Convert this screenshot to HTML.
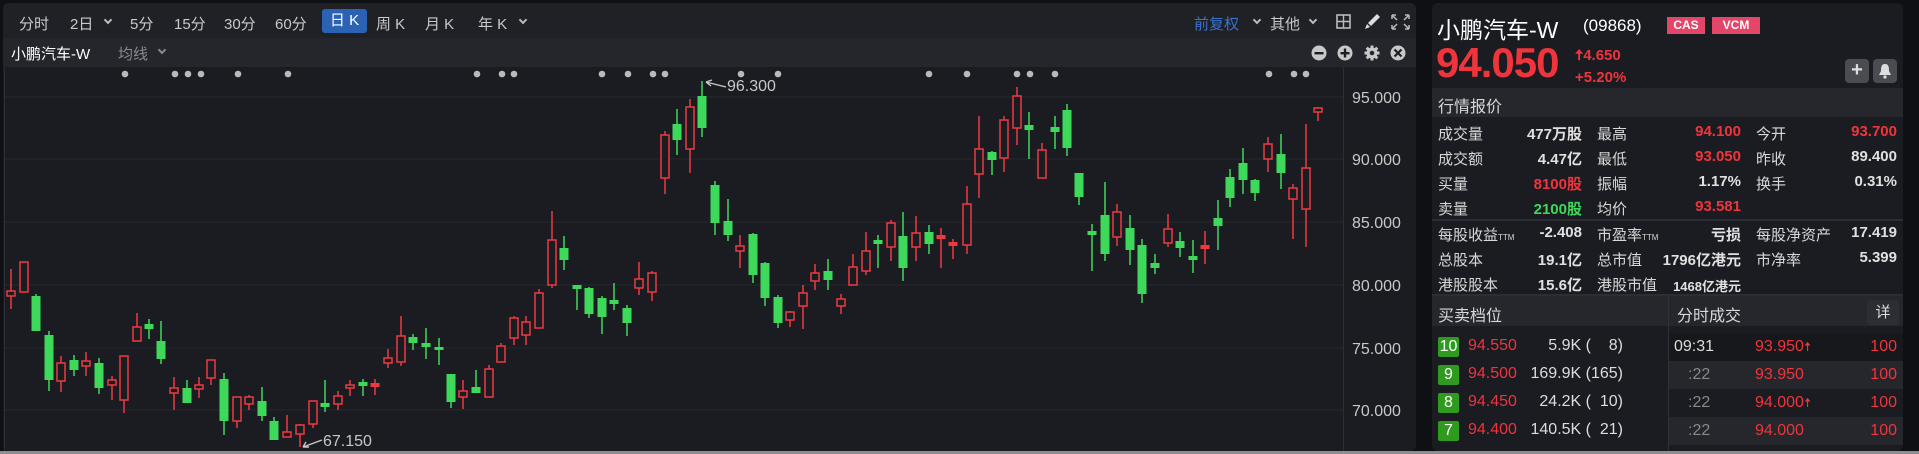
<!DOCTYPE html>
<html><head><meta charset="utf-8"><style>
*{margin:0;padding:0;box-sizing:border-box}
body{width:1919px;height:454px;background:#0f1014;overflow:hidden;position:relative;font-family:"Liberation Sans","Noto Sans CJK SC",sans-serif;color:#e6e6e6}
.a{position:absolute;white-space:nowrap}
.cp{position:absolute;left:3px;top:3px;width:1413px;height:448px;background:#1b1c21;border-radius:6px;overflow:hidden}
.tb{position:absolute;left:0;top:0;width:100%;height:35px;background:#1f2127}
.r2{position:absolute;left:0;top:35px;width:100%;height:29px;background:#24262c}
.t{font-size:15px;color:#c9c9c9;top:10px}
.chev{display:inline-block;width:6px;height:6px;border-right:2px solid #bbb;border-bottom:2px solid #bbb;transform:rotate(45deg);position:absolute}
.rp{position:absolute;left:1432px;top:3px;width:471px;height:448px;background:#1b1c21;border-radius:6px;overflow:hidden}
.hd{position:absolute;left:0;width:100%;background:#25272d}
.lb{font-size:15px;color:#d8d8d8}
.v{font-size:15px;font-weight:bold;color:#e0e0e0;text-align:right}
.red{color:#f0343c}.grn{color:#3ed85a}
.bd{position:absolute;width:21px;height:20px;background:#2e9a1e;color:#fff;font-size:16px;text-align:center;line-height:20px;border-radius:2px}
.ob{font-size:16px}
</style></head><body>
<div class="cp">
 <div class="tb"></div><div class="r2"></div>
 <div class="a t" style="left:16px">分时</div>
 <div class="a t" style="left:67px">2日</div><span class="chev" style="left:102px;top:14px"></span>
 <div class="a t" style="left:127px">5分</div>
 <div class="a t" style="left:171px">15分</div>
 <div class="a t" style="left:221px">30分</div>
 <div class="a t" style="left:272px">60分</div>
 <div class="a" style="left:319px;top:6px;width:45px;height:24px;background:#2b62b4;border-radius:3px;color:#fff;font-size:15px;text-align:center;line-height:24px">日 K</div>
 <div class="a t" style="left:373px">周 K</div>
 <div class="a t" style="left:422px">月 K</div>
 <div class="a t" style="left:475px">年 K</div><span class="chev" style="left:517px;top:14px"></span>
 <div class="a" style="left:1191px;top:10px;font-size:15px;color:#3a72c8">前复权</div><span class="chev" style="left:1251px;top:14px"></span>
 <div class="a t" style="left:1267px">其他</div><span class="chev" style="left:1307px;top:14px"></span>
 <svg class="a" style="left:1328px;top:9px" width="90" height="20" viewBox="0 0 90 20">
  <rect x="6" y="3" width="13" height="13" fill="none" stroke="#bbb" stroke-width="1.6"/><line x1="12.5" y1="3" x2="12.5" y2="16" stroke="#bbb" stroke-width="1.4"/><line x1="6" y1="9.5" x2="19" y2="9.5" stroke="#bbb" stroke-width="1.4"/>
  <path d="M46 2 L49 5 L40 14 L37 11 Z" fill="#ddd"/><path d="M36 12 L39 15 L34 17 Z" fill="#ddd"/>
  <path d="M61 3h4M61 3v4M78 3h-4M78 3v4M61 17h4M61 17v-4M78 17h-4M78 17v-4M62 4l4 4M77 4l-4 4M62 16l4-4M77 16l-4-4" stroke="#bbb" stroke-width="1.5" fill="none"/>
 </svg>
 <div class="a" style="left:8px;top:40px;font-size:15px;color:#fff">小鹏汽车-W</div>
 <div class="a" style="left:115px;top:40px;font-size:15px;color:#8a8b90">均线</div><span class="chev" style="left:156px;top:44px;border-color:#8a8b90"></span>
 <svg class="a" style="left:1306px;top:42px" width="100" height="18" viewBox="0 0 100 18">
  <circle cx="10" cy="8" r="7.5" fill="#c8c8c8"/><rect x="5.5" y="7" width="9" height="2.4" fill="#1d1e24"/>
  <circle cx="36" cy="8" r="7.5" fill="#c8c8c8"/><rect x="31.5" y="7" width="9" height="2.4" fill="#1d1e24"/><rect x="34.8" y="3.5" width="2.4" height="9" fill="#1d1e24"/>
  <circle cx="63" cy="8" r="5.5" fill="#c8c8c8"/><g stroke="#c8c8c8" stroke-width="3"><line x1="63" y1="0.5" x2="63" y2="15.5"/><line x1="55.5" y1="8" x2="70.5" y2="8"/><line x1="57.7" y1="2.7" x2="68.3" y2="13.3"/><line x1="68.3" y1="2.7" x2="57.7" y2="13.3"/></g><circle cx="63" cy="8" r="2.3" fill="#24262c"/>
  <circle cx="89" cy="8" r="7.5" fill="#c8c8c8"/><path d="M85.5 4.5l7 7M92.5 4.5l-7 7" stroke="#1d1e24" stroke-width="2.2"/>
 </svg>
</div>
<svg class="a" style="left:0;top:0" width="1420" height="454" viewBox="0 0 1420 454">
 <g stroke="#25272d" stroke-width="1"><line x1="4" y1="97" x2="1343" y2="97"/><line x1="4" y1="159" x2="1343" y2="159"/><line x1="4" y1="222" x2="1343" y2="222"/><line x1="4" y1="285" x2="1343" y2="285"/><line x1="4" y1="348" x2="1343" y2="348"/><line x1="4" y1="410" x2="1343" y2="410"/></g>
 <line x1="1343.5" y1="67" x2="1343.5" y2="451" stroke="#2c2e35"/>
 <line x1="4.5" y1="67" x2="4.5" y2="451" stroke="#2c2e35"/>
 <g fill="#b9b9b9">
  <circle cx="125" cy="74" r="3.3"/><circle cx="175" cy="74" r="3.3"/><circle cx="188" cy="74" r="3.3"/><circle cx="201" cy="74" r="3.3"/><circle cx="238" cy="74" r="3.3"/><circle cx="288" cy="74" r="3.3"/>
  <circle cx="477" cy="74" r="3.3"/><circle cx="502" cy="74" r="3.3"/><circle cx="514" cy="74" r="3.3"/><circle cx="602" cy="74" r="3.3"/><circle cx="628" cy="74" r="3.3"/><circle cx="653" cy="74" r="3.3"/><circle cx="665" cy="74" r="3.3"/><circle cx="741" cy="74" r="3.3"/><circle cx="778" cy="74" r="3.3"/>
  <circle cx="929" cy="74" r="3.3"/><circle cx="967" cy="74" r="3.3"/><circle cx="1017" cy="74" r="3.3"/><circle cx="1030" cy="74" r="3.3"/><circle cx="1055" cy="74" r="3.3"/><circle cx="1269" cy="74" r="3.3"/><circle cx="1294" cy="74" r="3.3"/><circle cx="1306" cy="74" r="3.3"/>
 </g>
 <g font-family="Liberation Sans,sans-serif" font-size="16" fill="#c8c8c8">
  <text x="1352" y="103">95.000</text><text x="1352" y="165">90.000</text><text x="1352" y="228">85.000</text><text x="1352" y="291">80.000</text><text x="1352" y="354">75.000</text><text x="1352" y="416">70.000</text>
  <text x="727" y="91" font-size="16">96.300</text><text x="323" y="446" font-size="16">67.150</text>
 </g>
 <g stroke="#c8c8c8" stroke-width="1.4" fill="none"><path d="M726 87 L706 82 M706 82 l6 -2 M706 82 l5 4"/><path d="M322 440 L303 447 M303 447 l6 0 M303 447 l3 -5"/></g>
 <g id="c" stroke-width="1.5"></g>
</svg>
<div class="rp">
 <div class="a" style="left:5px;top:8px;font-size:23px;color:#fff">小鹏汽车-W</div>
 <div class="a" style="left:151px;top:13px;font-size:17px;color:#fff">(09868)</div>
 <div class="a" style="left:235px;top:14px;width:38px;height:17px;background:#e4466a;color:#fff;font-size:12px;font-weight:bold;text-align:center;line-height:17px">CAS</div>
 <div class="a" style="left:280px;top:14px;width:48px;height:17px;background:#e4466a;color:#fff;font-size:12px;font-weight:bold;text-align:center;line-height:17px">VCM</div>
 <div class="a red" style="left:4px;top:36px;font-size:42px;font-weight:bold;letter-spacing:-1px">94.050</div>
 <div class="a red" style="left:143px;top:42px;font-size:15px;font-weight:bold">🠅4.650</div>
 <div class="a red" style="left:143px;top:66px;font-size:15px;font-weight:bold">+5.20%</div>
 <div class="a" style="left:413px;top:56px;width:24px;height:24px;background:#4a4c52;border-radius:4px;color:#ddd;font-size:20px;text-align:center;line-height:23px;font-weight:bold">+</div>
 <div class="a" style="left:441px;top:56px;width:24px;height:24px;background:#4a4c52;border-radius:4px"><svg width="24" height="24"><path d="M12 5 C8 5 8 9 8 12 L6 16 H18 L16 12 C16 9 16 5 12 5Z" fill="#ddd"/><circle cx="12" cy="18" r="1.6" fill="#ddd"/></svg></div>
 <div class="hd" style="top:85px;height:29px"></div>
 <div class="a lb" style="left:6px;top:90px;font-size:16px">行情报价</div>
 <div class="hd" style="top:216px;height:2px;background:#2c2e35"></div>
 <div class="hd" style="top:291px;height:2px;background:#2c2e35"></div>
 <div class="a lb" style="left:6px;top:120px">成交量</div><div class="a v" style="right:321px;top:120px">477万股</div>
 <div class="a lb" style="left:165px;top:120px">最高</div><div class="a v red" style="right:162px;top:120px">94.100</div>
 <div class="a lb" style="left:324px;top:120px">今开</div><div class="a v red" style="right:6px;top:120px">93.700</div>
 <div class="a lb" style="left:6px;top:145px">成交额</div><div class="a v" style="right:321px;top:145px">4.47亿</div>
 <div class="a lb" style="left:165px;top:145px">最低</div><div class="a v red" style="right:162px;top:145px">93.050</div>
 <div class="a lb" style="left:324px;top:145px">昨收</div><div class="a v" style="right:6px;top:145px">89.400</div>
 <div class="a lb" style="left:6px;top:170px">买量</div><div class="a v red" style="right:321px;top:170px">8100股</div>
 <div class="a lb" style="left:165px;top:170px">振幅</div><div class="a v" style="right:162px;top:170px">1.17%</div>
 <div class="a lb" style="left:324px;top:170px">换手</div><div class="a v" style="right:6px;top:170px">0.31%</div>
 <div class="a lb" style="left:6px;top:195px">卖量</div><div class="a v grn" style="right:321px;top:195px">2100股</div>
 <div class="a lb" style="left:165px;top:195px">均价</div><div class="a v red" style="right:162px;top:195px">93.581</div>
 <div class="a lb" style="left:6px;top:221px">每股收益<span style="font-size:8px">TTM</span></div><div class="a v" style="right:321px;top:221px">-2.408</div>
 <div class="a lb" style="left:165px;top:221px">市盈率<span style="font-size:8px">TTM</span></div><div class="a v" style="right:162px;top:221px">亏损</div>
 <div class="a lb" style="left:324px;top:221px">每股净资产</div><div class="a v" style="right:6px;top:221px">17.419</div>
 <div class="a lb" style="left:6px;top:246px">总股本</div><div class="a v" style="right:321px;top:246px">19.1亿</div>
 <div class="a lb" style="left:165px;top:246px">总市值</div><div class="a v" style="right:162px;top:246px">1796亿港元</div>
 <div class="a lb" style="left:324px;top:246px">市净率</div><div class="a v" style="right:6px;top:246px">5.399</div>
 <div class="a lb" style="left:6px;top:271px">港股股本</div><div class="a v" style="right:321px;top:271px">15.6亿</div>
 <div class="a lb" style="left:165px;top:271px">港股市值</div><div class="a v" style="right:162px;top:271px;font-size:13px;top:273px">1468亿港元</div>
 <div class="hd" style="top:293px;height:30px"></div>
 <div class="a" style="left:236px;top:293px;width:1px;height:160px;background:#2f3138"></div>
 <div class="a lb" style="left:6px;top:299px;font-size:16px">买卖档位</div>
 <div class="a lb" style="left:245px;top:299px;font-size:16px">分时成交</div>
 <div class="a" style="left:435px;top:297px;width:32px;height:25px;background:#2c2e34;border-radius:4px;color:#ddd;font-size:15px;text-align:center;line-height:25px">详</div>
 <div class="a" style="left:237px;top:330px;width:234px;height:28px;background:#17181c"></div>
 <div class="a" style="left:237px;top:358px;width:234px;height:28px;background:#25272d"></div>
 <div class="a" style="left:237px;top:414px;width:234px;height:28px;background:#25272d"></div>
 <div class="bd" style="left:6px;top:334px">10</div><div class="a ob red" style="left:36px;top:334px">94.550</div><div class="a ob" style="right:280px;top:334px;color:#ddd">5.9K (&nbsp;&nbsp;&nbsp;&nbsp;8)</div>
 <div class="bd" style="left:6px;top:362px">9</div><div class="a ob red" style="left:36px;top:362px">94.500</div><div class="a ob" style="right:280px;top:362px;color:#ddd">169.9K (165)</div>
 <div class="bd" style="left:6px;top:390px">8</div><div class="a ob red" style="left:36px;top:390px">94.450</div><div class="a ob" style="right:280px;top:390px;color:#ddd">24.2K (&nbsp;&nbsp;10)</div>
 <div class="bd" style="left:6px;top:418px">7</div><div class="a ob red" style="left:36px;top:418px">94.400</div><div class="a ob" style="right:280px;top:418px;color:#ddd">140.5K (&nbsp;&nbsp;21)</div>
 <div class="a ob" style="left:242px;top:335px;color:#ddd">09:31</div><div class="a ob red" style="left:323px;top:335px">93.950<span style="font-size:13px">🠅</span></div><div class="a ob red" style="right:6px;top:335px">100</div>
 <div class="a ob" style="left:256px;top:363px;color:#888">:22</div><div class="a ob red" style="left:323px;top:363px">93.950</div><div class="a ob red" style="right:6px;top:363px">100</div>
 <div class="a ob" style="left:256px;top:391px;color:#888">:22</div><div class="a ob red" style="left:323px;top:391px">94.000<span style="font-size:13px">🠅</span></div><div class="a ob red" style="right:6px;top:391px">100</div>
 <div class="a ob" style="left:256px;top:419px;color:#888">:22</div><div class="a ob red" style="left:323px;top:419px">94.000</div><div class="a ob red" style="right:6px;top:419px">100</div>
</div>
<div class="a" style="left:0;top:451px;width:1919px;height:3px;background:#8c8d91"></div>
<script>
var d=[[11,269,291,296,309,'r'],[24,262,262,292,292,'r'],[36,294,296,331,331,'g'],[49,331,335,380,391,'g'],[61,356,363,381,392,'r'],[74,355,360,370,376,'g'],[86,352,361,366,376,'r'],[99,358,363,388,394,'g'],[112,376,380,385,400,'r'],[124,356,356,400,413,'r'],[137,313,327,341,341,'r'],[149,319,324,329,339,'g'],[161,321,341,359,364,'g'],[174,377,388,393,410,'r'],[187,380,388,403,403,'g'],[199,377,385,389,398,'r'],[211,360,360,378,385,'r'],[224,373,379,421,435,'g'],[237,397,397,421,428,'r'],[249,395,397,404,410,'r'],[262,387,401,416,421,'g'],[274,417,421,440,440,'g'],[287,415,432,437,437,'r'],[300,424,425,434,447,'r'],[313,401,401,424,428,'r'],[325,380,404,406,412,'g'],[338,391,396,404,410,'r'],[350,380,385,388,396,'r'],[363,379,383,385,396,'g'],[375,379,384,386,395,'r'],[388,349,358,363,368,'r'],[401,316,336,362,366,'r'],[413,334,337,343,350,'g'],[426,328,344,346,359,'g'],[439,338,348,349,365,'g'],[451,374,374,402,408,'g'],[463,380,391,397,409,'r'],[476,370,387,393,393,'g'],[489,365,369,397,397,'r'],[501,343,346,362,362,'r'],[514,316,318,338,345,'r'],[526,316,322,335,345,'r'],[539,289,293,328,328,'r'],[552,211,240,285,288,'r'],[564,236,248,260,270,'g'],[577,286,286,288,310,'g'],[589,287,288,314,318,'g'],[602,296,298,317,334,'g'],[614,283,301,303,310,'g'],[627,305,308,323,336,'g'],[639,262,279,288,295,'r'],[652,271,273,292,301,'r'],[665,131,135,178,194,'r'],[677,109,124,140,155,'g'],[690,99,107,149,173,'r'],[702,81,96,128,137,'g'],[715,181,185,223,235,'g'],[728,199,221,235,241,'g'],[740,235,246,251,268,'r'],[753,233,234,275,283,'g'],[765,262,263,298,306,'g'],[778,295,297,323,328,'g'],[790,311,312,320,327,'r'],[803,285,293,306,329,'r'],[815,264,273,281,290,'r'],[828,259,271,280,290,'g'],[841,294,299,306,314,'r'],[853,254,267,285,285,'r'],[866,232,251,271,275,'r'],[878,235,241,243,268,'g'],[891,220,223,247,261,'r'],[903,212,236,268,281,'g'],[916,216,233,247,261,'r'],[929,225,232,244,254,'g'],[941,228,236,238,268,'r'],[953,239,243,245,259,'r'],[967,186,204,245,254,'r'],[979,116,149,174,198,'r'],[992,151,152,160,175,'g'],[1004,116,120,158,172,'r'],[1017,87,96,128,145,'r'],[1029,112,125,130,159,'g'],[1042,143,150,178,178,'r'],[1055,116,127,132,149,'g'],[1067,104,110,148,156,'g'],[1079,173,173,197,205,'g'],[1092,224,232,234,271,'g'],[1105,182,215,254,261,'g'],[1117,204,212,237,246,'r'],[1130,215,228,250,265,'g'],[1142,239,245,294,303,'g'],[1155,254,263,268,274,'g'],[1168,214,229,243,247,'r'],[1180,232,241,248,257,'g'],[1193,240,257,259,273,'g'],[1205,231,246,248,264,'r'],[1218,200,218,226,250,'g'],[1230,169,177,198,207,'g'],[1243,148,163,180,194,'g'],[1255,179,180,193,201,'g'],[1268,137,144,159,172,'r'],[1281,134,154,173,189,'g'],[1293,184,188,199,239,'r'],[1306,124,168,209,247,'r'],[1318,107,108,112,121,'r']];
var s='';d.forEach(function(c){var col=c[5]=='r'?'#ec3a42':'#3ed85a';var h=c[3]-c[2];
s+='<line x1="'+c[0]+'" y1="'+c[1]+'" x2="'+c[0]+'" y2="'+c[4]+'" stroke="'+col+'"/>';
if(h<3){s+='<rect x="'+(c[0]-4.5)+'" y="'+(c[2]-1)+'" width="9" height="'+(h+2)+'" fill="'+col+'" stroke="none"/>';}
else if(c[5]=='r'){s+='<rect x="'+(c[0]-4)+'" y="'+c[2]+'" width="8" height="'+h+'" fill="#1b1c21" stroke="'+col+'"/>';}
else{s+='<rect x="'+(c[0]-4.5)+'" y="'+c[2]+'" width="9" height="'+h+'" fill="'+col+'" stroke="none"/>';}});
document.getElementById('c').innerHTML=s;
</script>
</body></html>
